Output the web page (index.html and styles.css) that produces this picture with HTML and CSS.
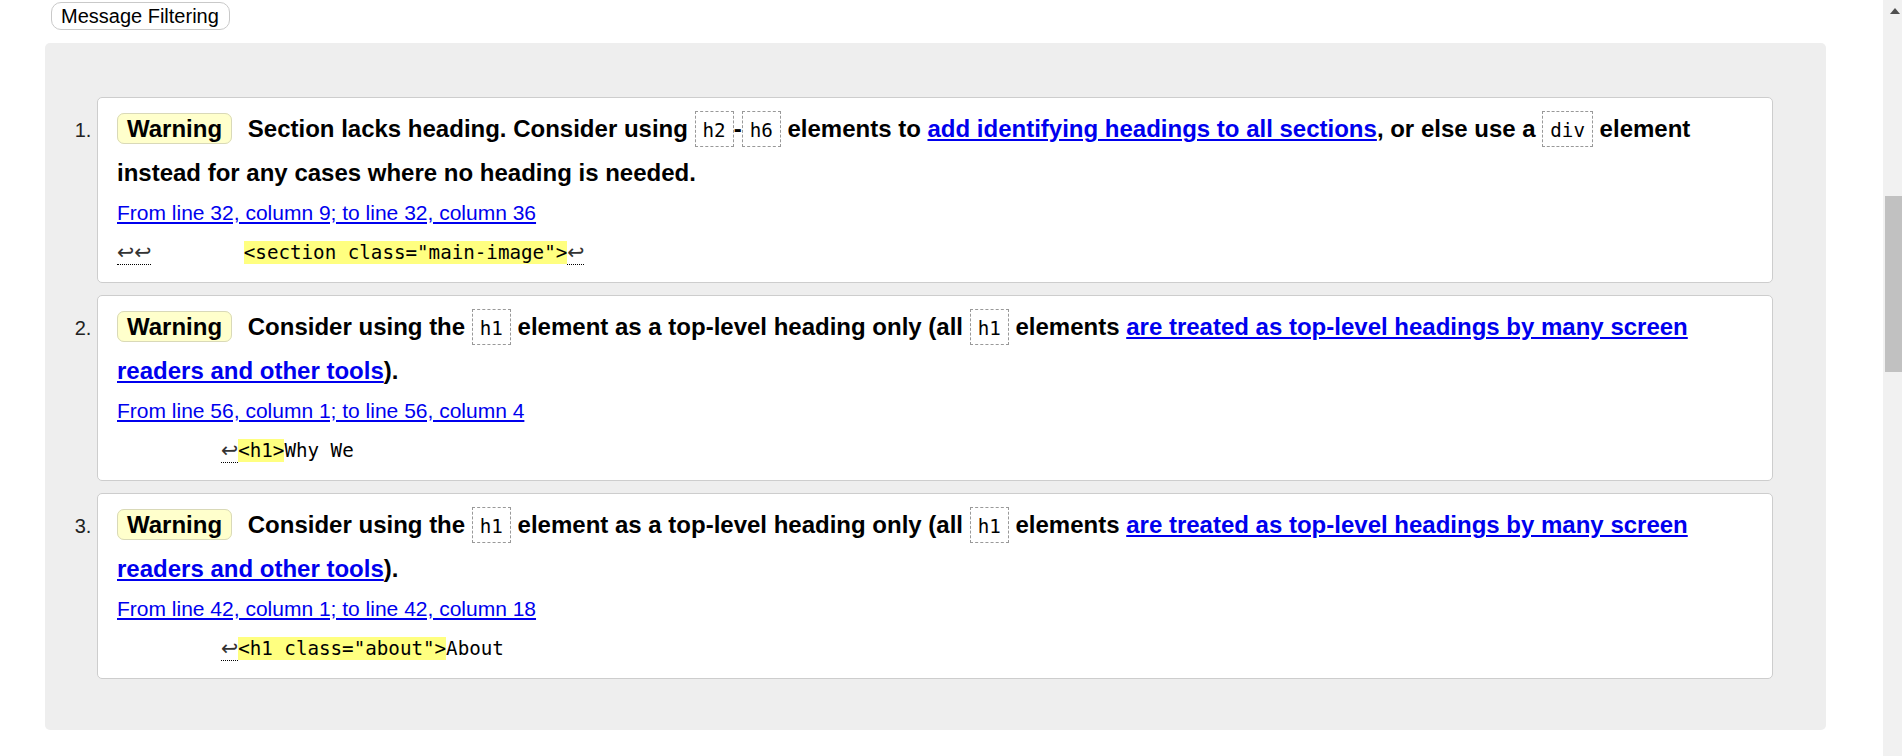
FILE: index.html
```html
<!DOCTYPE html>
<html lang="en">
<head>
<meta charset="utf-8">
<title>Validator results</title>
<link rel="stylesheet" href="styles.css">
</head>
<body>
<div class="page">
  <div class="main">
    <div class="toolbar">
      <button class="filter-btn" type="button">Message Filtering</button>
    </div>
    <div class="results">
      <ol class="messages">
        <li class="msg">
          <p class="msg-text"><strong class="badge">Warning</strong> <span>Section lacks heading. Consider using <code>h2</code>-<code>h6</code> elements to <a href="#">add identifying headings to all sections</a>, or else use a <code>div</code> element instead for any cases where no heading is needed.</span></p>
          <p class="location"><a href="#">From line 32, column 9; to line 32, column 36</a></p>
          <p class="extract"><code><span class="lf">↩↩</span>        <mark>&lt;section class="main-image"&gt;</mark><span class="lf">↩</span></code></p>
        </li>
        <li class="msg">
          <p class="msg-text"><strong class="badge">Warning</strong> <span>Consider using the <code>h1</code> element as a top-level heading only (all <code>h1</code> elements <a href="#">are treated as top-level headings by many screen readers and other tools</a>).</span></p>
          <p class="location"><a href="#">From line 56, column 1; to line 56, column 4</a></p>
          <p class="extract"><code>         <span class="lf">↩</span><mark>&lt;h1&gt;</mark>Why We</code></p>
        </li>
        <li class="msg">
          <p class="msg-text"><strong class="badge">Warning</strong> <span>Consider using the <code>h1</code> element as a top-level heading only (all <code>h1</code> elements <a href="#">are treated as top-level headings by many screen readers and other tools</a>).</span></p>
          <p class="location"><a href="#">From line 42, column 1; to line 42, column 18</a></p>
          <p class="extract"><code>         <span class="lf">↩</span><mark>&lt;h1 class="about"&gt;</mark>About</code></p>
        </li>
      </ol>
    </div>
  </div>
  <div class="scrollbar">
    <div class="scroll-up"></div>
    <div class="scroll-thumb"></div>
  </div>
</div>
</body>
</html>
```

FILE: styles.css
```css
html, body {
  margin: 0;
  padding: 0;
  background: #fff;
  overflow: hidden;
}

body {
  font-family: "Liberation Sans", Arial, sans-serif;
  color: #000;
}

.page {
  display: flex;
  width: 1902px;
  height: 756px;
}

.main {
  flex: 0 0 1883px;
  width: 1883px;
}

.toolbar {
  padding: 2px 0 0 51px;
  height: 28px;
}

.filter-btn {
  box-sizing: border-box;
  height: 28px;
  margin: 0;
  padding: 0 10px 0 9px;
  font-family: "Liberation Sans", Arial, sans-serif;
  font-size: 20px;
  line-height: 26px;
  color: #000;
  background: #fff;
  border: 1px solid #c9c9c9;
  border-radius: 10px;
}

.results {
  margin: 13px 57px 0 45px;
  padding: 54px 53px 51px 52px;
  background: #eeeeee;
  border-radius: 5px;
}

.messages {
  margin: 0;
  padding: 0;
  list-style: decimal outside;
}

.msg {
  box-sizing: border-box;
  height: 186px;
  background: #fff;
  border: 1px solid #cdcdcd;
  border-radius: 5px;
  padding: 9px 19px 0 19px;
  margin: 0 0 12px 0;
  font-size: 20px;
  line-height: 1;
}

.msg:last-child {
  margin-bottom: 0;
}

.msg::marker {
  font-family: "Liberation Sans", Arial, sans-serif;
  font-size: 20px;
  color: #222;
}

.msg-text {
  margin: 0;
  font-size: 24px;
  font-weight: bold;
  line-height: 44px;
  height: 88px;
}

.msg-text a {
  color: #0000ee;
  text-decoration: underline;
}

.badge {
  font-weight: bold;
  background: #ffffcc;
  border: 1px solid #d9d9b8;
  border-radius: 7px;
  padding: 1px 9px;
  margin-right: 9px;
}

.msg-text code {
  font-family: "DejaVu Sans Mono", "Liberation Mono", monospace;
  font-size: 19.2px;
  font-weight: normal;
  line-height: 1;
  border: 1px dashed #999;
  padding: 7px 7px 4px 7px;
}

.location {
  margin: 0;
  padding-top: 1px;
  font-size: 21px;
  line-height: 33px;
  height: 33px;
}

.location a {
  color: #0000ee;
  text-decoration: underline;
}

.extract {
  margin: 0;
  padding-top: 2px;
  line-height: 43px;
  height: 43px;
}

.extract code {
  font-family: "DejaVu Sans Mono", "Liberation Mono", monospace;
  font-size: 19.2px;
  white-space: pre;
}

.extract mark {
  background: #ffff80;
  color: #000;
}

.lf {
  font-family: "DejaVu Sans", sans-serif;
  font-size: 20.5px;
  line-height: 1;
  color: #333;
  border-bottom: 1px dotted #000;
}

.scrollbar {
  flex: 0 0 19px;
  width: 19px;
  height: 756px;
  background: #f1f1f1;
  display: flex;
  flex-direction: column;
}

.scroll-up {
  width: 0;
  height: 0;
  margin: 8px 0 0 7px;
  border-left: 5.5px solid transparent;
  border-right: 5.5px solid transparent;
  border-bottom: 6px solid #505050;
}

.scroll-thumb {
  margin: 182px 0 0 2px;
  height: 176px;
  background: #c1c1c1;
}
```
